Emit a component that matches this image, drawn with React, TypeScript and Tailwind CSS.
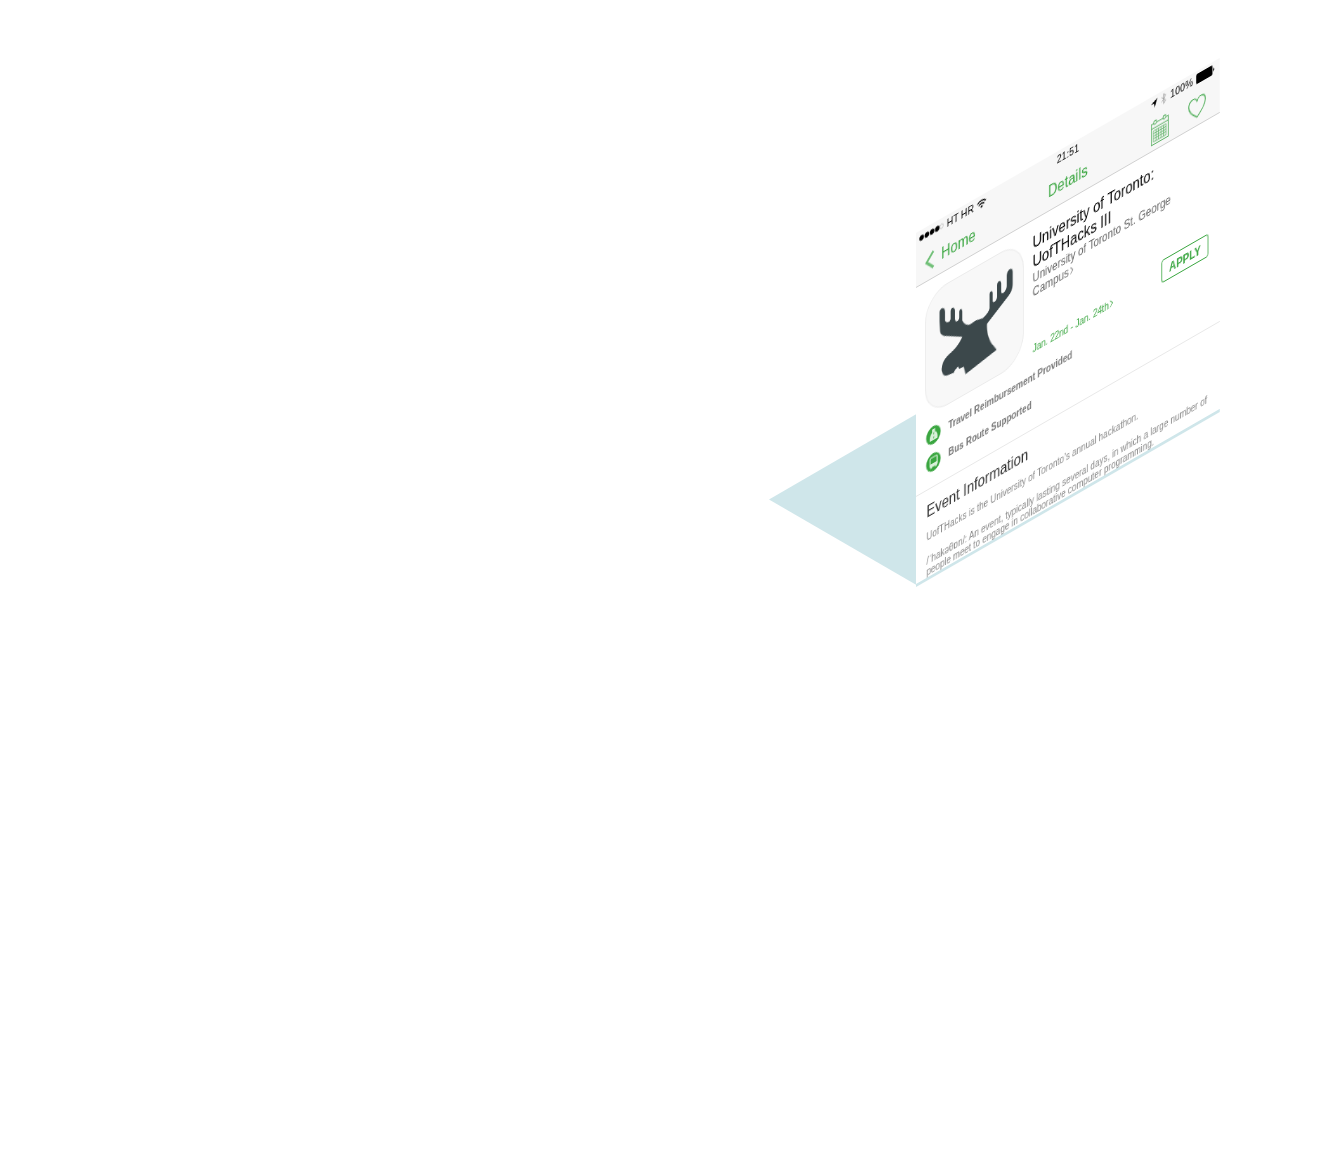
import React from "react";

function StatusBar() {
  return (
    <div className="relative flex h-4 items-center justify-between pl-1 pr-1.5 text-[11px] leading-4 text-black">
      <div className="flex items-center">
        <svg className="mr-1 h-[6px] w-[30px]" viewBox="0 0 30 6" aria-hidden="true">
          <circle cx="3" cy="3" r="2.8" />
          <circle cx="9.400" cy="3" r="2.8" />
          <circle cx="15.800" cy="3" r="2.8" />
          <circle cx="22.200" cy="3" r="2.8" />
          <circle cx="27.600" cy="3" r="2.100" fill="none" stroke="#999" strokeWidth=".5" />
        </svg>
        <span>HT HR</span>
        <svg className="ml-1 h-[9px] w-3" viewBox="0 0 12 9" fill="none" stroke="#000" strokeWidth="1.3" aria-hidden="true">
          <path d="M.8 3.3a7.4 7.4 0 0 1 10.4 0M2.6 5.4a4.8 4.8 0 0 1 6.8 0" />
          <path d="M6 8.8 4.3 7a2.4 2.4 0 0 1 3.4 0Z" fill="#000" stroke="none" />
        </svg>
      </div>
      <span className="absolute left-1/2 top-0 -translate-x-1/2 font-medium">21:51</span>
      <div className="flex items-center">
        <svg className="mr-1 h-2 w-2" viewBox="0 0 8 8" aria-hidden="true">
          <path d="M8 0 4.7 8 4 4 0 3.4Z" />
        </svg>
        <svg className="mr-1 h-[11px] w-[8px]" viewBox="0 0 7 10" fill="none" stroke="#999" strokeWidth=".8" aria-hidden="true">
          <path d="M1 2.8 5.6 7.2 3.4 9.4V.6l2.2 2.2L1 7.2" />
        </svg>
        <span>100%</span>
        <svg className="ml-1 h-[10px] w-[23px]" viewBox="0 0 23 10" aria-hidden="true">
          <rect width="20" height="10" rx="1.5" />
          <path d="M21 3.300c1.800.6 1.800 2.800 0 3.400Z" />
        </svg>
      </div>
    </div>
  );
}

function NavBar() {
  return (
    <nav className="relative flex h-[38px] items-center justify-between pl-[11px] pr-[17px] pt-0.5 text-base leading-5 text-[#3aa640]">
      <a href="#home" className="flex items-center gap-2">
        <svg className="h-[18px] w-3" viewBox="0 0 12 18" fill="none" stroke="#6fbf76" strokeWidth="2.600" aria-hidden="true">
          <path d="M10.500 1 2 9l8.500 8" />
        </svg>
        Home
      </a>
      <h1 className="absolute left-1/2 -translate-x-1/2">Details</h1>
      <div className="flex items-center gap-6">
        <button type="button" aria-label="Calendar">
          <svg className="block h-[25px] w-[22px]" viewBox="0 0 21 24" fill="none" stroke="#5fb267" strokeWidth="1" aria-hidden="true">
            <path d="M.5 3.500h20v20H.5zM.5 8h20" />
            <circle cx="5" cy="3" r="1.700" fill="#f7f7f7" />
            <circle cx="16" cy="3" r="1.700" fill="#f7f7f7" />
            <path d="M3 10.500h15v10.500H3zM3 13h15M3 15.500h15M3 18h15M6 10.500v10.500M9 10.500v10.500M12 10.500v10.500M15 10.500v10.500" strokeWidth=".8" />
          </svg>
        </button>
        <button type="button" aria-label="Favourite">
          <svg className="block h-[22px] w-[22px]" viewBox="0 0 22 22" fill="none" stroke="#4fae58" strokeWidth="1.200" aria-hidden="true">
            <path d="M11 21C5.500 17 .7 12.800.7 7.300.7 1.200 8.500-.8 11 5c2.500-5.800 10.300-3.800 10.300 2.300C21.300 12.800 16.500 17 11 21Z" />
          </svg>
        </button>
      </div>
    </nav>
  );
}

function Moose() {
  return (
    <div className="h-[122px] w-[122px] shrink-0 rounded-[28px] border border-[#ebebeb] bg-[#f8f8f8]">
      <svg className="block h-full w-full" viewBox="0 0 120 120" role="img" aria-label="Moose">
        <g transform="matrix(1.2376 .5776 0 1 -1146.250 -829.850)">
          <path
            fill="#3c484b"
            d="M940 320V311C940 306 945.500 305 945.500 310V319C946 322 951 321 951 317V310C951 305 955.300 305 955.300 309V318C956 321.500 959.500 320 959.500 316V311C959.500 307 962.700 306 962.700 310V319C964 322 966 323.500 969 323.300C973 322 975 319 978.300 318.300L983.300 316.700C986 314 989 311 989.800 307V293C990 289 993 288.500 993 291.500V300C994 302 997.300 299 997.300 295V284C997.500 279 1001.500 278 1001.500 282V291C1002.500 294 1007 289 1007 284V274C1007.500 267 1013 265 1013 270V282C1013 286 1012 290 1009 294L987.300 322.300C987 330 989 338 992 342L997 348.300L966 372.700L964 365.300L959.500 367.500L958.500 365L954.700 369.300V371L949.300 373.300C946 375 944 374.500 943 372C941.500 369 942 366 943 362.500C945 357 948 354 952 350.500C957 346 960 341 962.700 335.300L946 334.500C942 334 940.800 332 940.500 329Z"
          />
        </g>
      </svg>
    </div>
  );
}

function Chevron() {
  return (
    <svg className="ml-px inline-block h-2 w-[5px] align-baseline" viewBox="0 0 5 8" fill="none" stroke="currentColor" strokeWidth="1" aria-hidden="true">
      <path d="m.7.700 3 3.300-3 3.300" />
    </svg>
  );
}

function EventHeader() {
  return (
    <section className="flex items-start pl-[11px] pr-[14px] pt-[13px]">
      <Moose />
      <div className="ml-[11px] flex h-[122px] min-w-0 flex-1 flex-col">
        <h2 className="whitespace-nowrap text-base leading-[19px] text-black">
          University of Toronto:
          <br />
          UofTHacks III
        </h2>
        <a href="#venue" className="whitespace-nowrap text-xs leading-[14px] text-[#666]">
          University of Toronto St. George
          <br />
          Campus
          <Chevron />
        </a>
        <a href="#dates" className="mt-auto whitespace-nowrap text-[10px] leading-3 text-[#3aa640]">
          Jan. 22nd - Jan. 24th
          <Chevron />
        </a>
      </div>
      <button
        type="button"
        className="mt-[101px] h-[23px] w-[58px] shrink-0 rounded-[3px] border border-[#3aa640] text-xs font-bold leading-5 text-[#3aa640]"
      >
        APPLY
      </button>
    </section>
  );
}

function Perks() {
  return (
    <ul className="flex flex-col gap-[9px] pb-[15px] pl-3 pt-[11px] text-[10px] font-bold leading-[18px] text-[#777]">
      <li className="flex items-center gap-[9px]">
        <svg className="h-[18px] w-[19px]" viewBox="0 0 18 18" aria-hidden="true">
          <circle cx="9" cy="9" r="9" fill="#3aa640" />
          <path fill="#d9f0da" d="M7.500 3h3.500v3c2.500 1.500 3.500 4 3 8h-9.500c-.5-3.500.5-6.500 3-8Z" />
          <path d="M9.300 6.500v2M9.300 10.500v2" fill="none" stroke="#3aa640" strokeWidth=".9" />
        </svg>
        Travel Reimbursement Provided
      </li>
      <li className="flex items-center gap-[9px]">
        <svg className="h-[18px] w-[19px]" viewBox="0 0 18 18" aria-hidden="true">
          <circle cx="9" cy="9" r="9" fill="#3aa640" />
          <rect x="4.800" y="4" width="8.800" height="9" rx="1" fill="none" stroke="#d9f0da" strokeWidth="1.200" />
          <path d="M4.800 10h8.800v3H4.800zM5.300 12.500h2v2h-2zM11.200 12.500h2v2h-2z" fill="#d9f0da" />
        </svg>
        Bus Route Supported
      </li>
    </ul>
  );
}

export default function App() {
  return (
    <main className="min-h-screen overflow-hidden bg-white pt-[58px] font-['Liberation_Sans',Arial,sans-serif]">
      <div className="relative ml-auto mr-[117px] w-[451px] pt-[175px]">
        <svg className="absolute left-0 top-[356px] h-[171px] w-[148px]" viewBox="0 0 148 171" aria-hidden="true">
          <path d="M0 85.500 147.500 0v171Z" fill="#cfe6ea" />
        </svg>
        {/* Isometric side face: every child shares this one projection. */}
        <article className="ml-[147px] w-[375px] origin-top-left border-b-[3px] border-[#cfe6ea] bg-white will-change-transform [transform:matrix(0.81,-0.467,0,1,0,0)]">
          <header className="border-b border-[#d0d0d0] bg-[#f7f7f7]">
            <StatusBar />
            <NavBar />
          </header>
          <EventHeader />
          <Perks />
          <section className="border-t border-[#e8e8e8] px-[13px] pt-3 text-[10px] leading-[11px] text-[#888]">
            <h2 className="text-base leading-[19px] text-[#333]">Event Information</h2>
            <p className="mt-[10px]">UofTHacks is the University of Toronto’s annual hackathon.</p>
            <p className="mt-[13px] whitespace-nowrap">
              /ˈhakəθɒn/: An event, typically lasting several days, in which a large number of
              <br />
              people meet to engage in collaborative computer programming.
            </p>
          </section>
        </article>
      </div>
    </main>
  );
}
